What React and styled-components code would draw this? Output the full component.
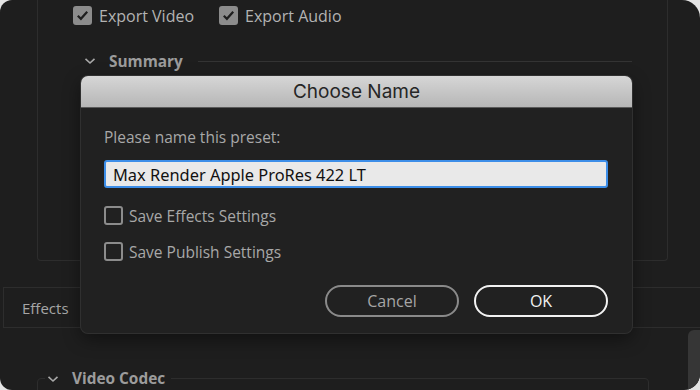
import React from 'react';
import styled, { createGlobalStyle } from 'styled-components';

const GlobalStyle = createGlobalStyle`
  html, body {
    margin: 0;
    padding: 0;
    background: #e4e4e4;
  }
  * {
    box-sizing: border-box;
  }
`;

const uiFont = `"Open Sans", Lato, sans-serif`;

const Window = styled.div`
  position: relative;
  width: 700px;
  height: 390px;
  background: #1e1e1e;
  border-radius: 12px 18px 16px 12px;
  overflow: hidden;
  display: flex;
  flex-direction: column;
  font-family: ${uiFont};
`;

const Panel = styled.div`
  margin-left: 37px;
  width: 631px;
  height: 261px;
  flex-shrink: 0;
  border: 1px solid #2d2d2d;
  border-top: none;
  border-radius: 0 0 4px 4px;
  display: flex;
  flex-direction: column;
`;

const ExportRow = styled.div`
  display: flex;
  gap: 25px;
  padding: 5px 0 0 35px;
`;

const CheckRow = styled.label`
  display: flex;
  align-items: center;
  gap: ${(p) => p.gap || 7}px;
  font-size: ${(p) => p.size || 16}px;
  color: ${(p) => p.color || '#b3b3b3'};
  height: 21px;
`;

const Box = styled.span`
  width: 19px;
  height: 19px;
  border-radius: 3px;
  border: 2px solid #8c8c8c;
  background: ${(p) => (p.checked ? '#8c8c8c' : 'transparent')};
  display: flex;
  align-items: center;
  justify-content: center;
  flex-shrink: 0;
`;

const SectionHead = styled.div`
  display: flex;
  align-items: center;
  margin: 25px 35px 0 46px;
  height: 20px;
  color: #9c9c9c;
  font-weight: 700;
  font-size: 15.4px;
`;

const Chevron = styled.span`
  display: flex;
  width: 13px;
  margin-right: 12px;
`;

const Rule = styled.span`
  flex: 1;
  height: 1px;
  background: #333;
  margin-left: 15px;
`;

const TabStrip = styled.div`
  margin: 26px 0 0 3px;
  height: 41px;
  flex-shrink: 0;
  border-top: 1px solid #2d2d2d;
  border-bottom: 1px solid #2d2d2d;
  display: flex;
`;

const Tab = styled.div`
  width: 78px;
  border-left: 1px solid #2d2d2d;
  border-right: 1px solid #2d2d2d;
  padding-left: 18px;
  display: flex;
  align-items: center;
  color: #a6a6a6;
  font-size: 15px;
`;

const Bottom = styled.div`
  flex: 1;
  display: flex;
  justify-content: space-between;
`;

const Fieldset = styled.fieldset`
  margin: 40px 0 0 37px;
  width: 612px;
  height: 60px;
  padding: 0 0 0 7px;
  border: 1px solid #2d2d2d;
  border-radius: 4px 4px 0 0;
`;

const Legend = styled.legend`
  display: flex;
  align-items: center;
  padding: 0 6px 0 2px;
  color: #9c9c9c;
  font-weight: 700;
  font-size: 15.4px;
`;

const Scrollbar = styled.div`
  width: 12px;
  margin-top: 2px;
  background: #363636;
  border-radius: 6px 0 0 0;
`;

const Dialog = styled.div`
  position: absolute;
  left: 81px;
  top: 76px;
  width: 551px;
  height: 257px;
  background: #212121;
  border-radius: 7px;
  box-shadow: 0 0 0 1px #303030, 0 6px 18px rgba(0, 0, 0, 0.45);
  display: flex;
  flex-direction: column;
  overflow: hidden;
`;

const TitleBar = styled.div`
  height: 32px;
  background: linear-gradient(#d6d6d6, #b6b6b6);
  border-bottom: 1px solid #5a5a5a;
  display: flex;
  align-items: center;
  justify-content: center;
  font-family: Inter, "Liberation Sans", sans-serif;
  font-size: 19px;
  color: #262626;
`;

const Body = styled.div`
  flex: 1;
  display: flex;
  flex-direction: column;
  padding: 19px 24px 16px 23px;
`;

const Prompt = styled.div`
  color: #a8a8a8;
  font-size: 15.5px;
  height: 20px;
  line-height: 20px;
`;

const NameInput = styled.input`
  margin-top: 13px;
  width: 504px;
  height: 28px;
  border: 2px solid #3d8ee8;
  border-radius: 3px;
  background: #e9e9e9;
  padding: 0 7px;
  font-family: "Noto Sans", "Open Sans", sans-serif;
  font-size: 16.4px;
  color: #111;
  outline: none;
`;

const Options = styled.div`
  margin-top: 17px;
  display: flex;
  flex-direction: column;
  gap: 15px;
`;

const Buttons = styled.div`
  margin-top: auto;
  display: flex;
  justify-content: flex-end;
  gap: 15px;
`;

const Button = styled.button`
  width: 134px;
  height: 32px;
  border-radius: 16px;
  background: transparent;
  border: 2px solid ${(p) => (p.primary ? '#f2f2f2' : '#8a8a8a')};
  color: ${(p) => (p.primary ? '#f2f2f2' : '#a6a6a6')};
  font-family: ${uiFont};
  font-size: 16px;
  padding: 0;
`;

const ChevronIcon = () => (
  <svg width="12" height="8" viewBox="0 0 12 8">
    <path d="M1.5 1.8 L6 6 L10.5 1.8" fill="none" stroke="#a8a8a8" strokeWidth="1.6" />
  </svg>
);

const Check = ({ checked }) => (
  <Box checked={checked}>
    {checked && (
      <svg width="13" height="11" viewBox="0 0 13 11">
        <path d="M1.8 5.8 L4.9 8.8 L11.2 1.8" fill="none" stroke="#1e1e1e" strokeWidth="2.2" />
      </svg>
    )}
  </Box>
);

const App = () => {
  return (
    <>
      <GlobalStyle />
      <Window>
        <Panel>
          <ExportRow>
            <CheckRow>
              <Check checked />
              Export Video
            </CheckRow>
            <CheckRow>
              <Check checked />
              Export Audio
            </CheckRow>
          </ExportRow>
          <SectionHead>
            <Chevron>
              <ChevronIcon />
            </Chevron>
            Summary
            <Rule />
          </SectionHead>
        </Panel>

        <TabStrip>
          <Tab>Effects</Tab>
        </TabStrip>

        <Bottom>
          <Fieldset>
            <Legend>
              <Chevron>
                <ChevronIcon />
              </Chevron>
              Video Codec
            </Legend>
          </Fieldset>
          <Scrollbar />
        </Bottom>

        <Dialog>
          <TitleBar>Choose Name</TitleBar>
          <Body>
            <Prompt>Please name this preset:</Prompt>
            <NameInput readOnly value="Max Render Apple ProRes 422 LT" />
            <Options>
              <CheckRow size={15.5} gap={6} color="#a8a8a8">
                <Check />
                Save Effects Settings
              </CheckRow>
              <CheckRow size={15.5} gap={6} color="#a8a8a8">
                <Check />
                Save Publish Settings
              </CheckRow>
            </Options>
            <Buttons>
              <Button>Cancel</Button>
              <Button primary>OK</Button>
            </Buttons>
          </Body>
        </Dialog>
      </Window>
    </>
  );
};

export default App;
